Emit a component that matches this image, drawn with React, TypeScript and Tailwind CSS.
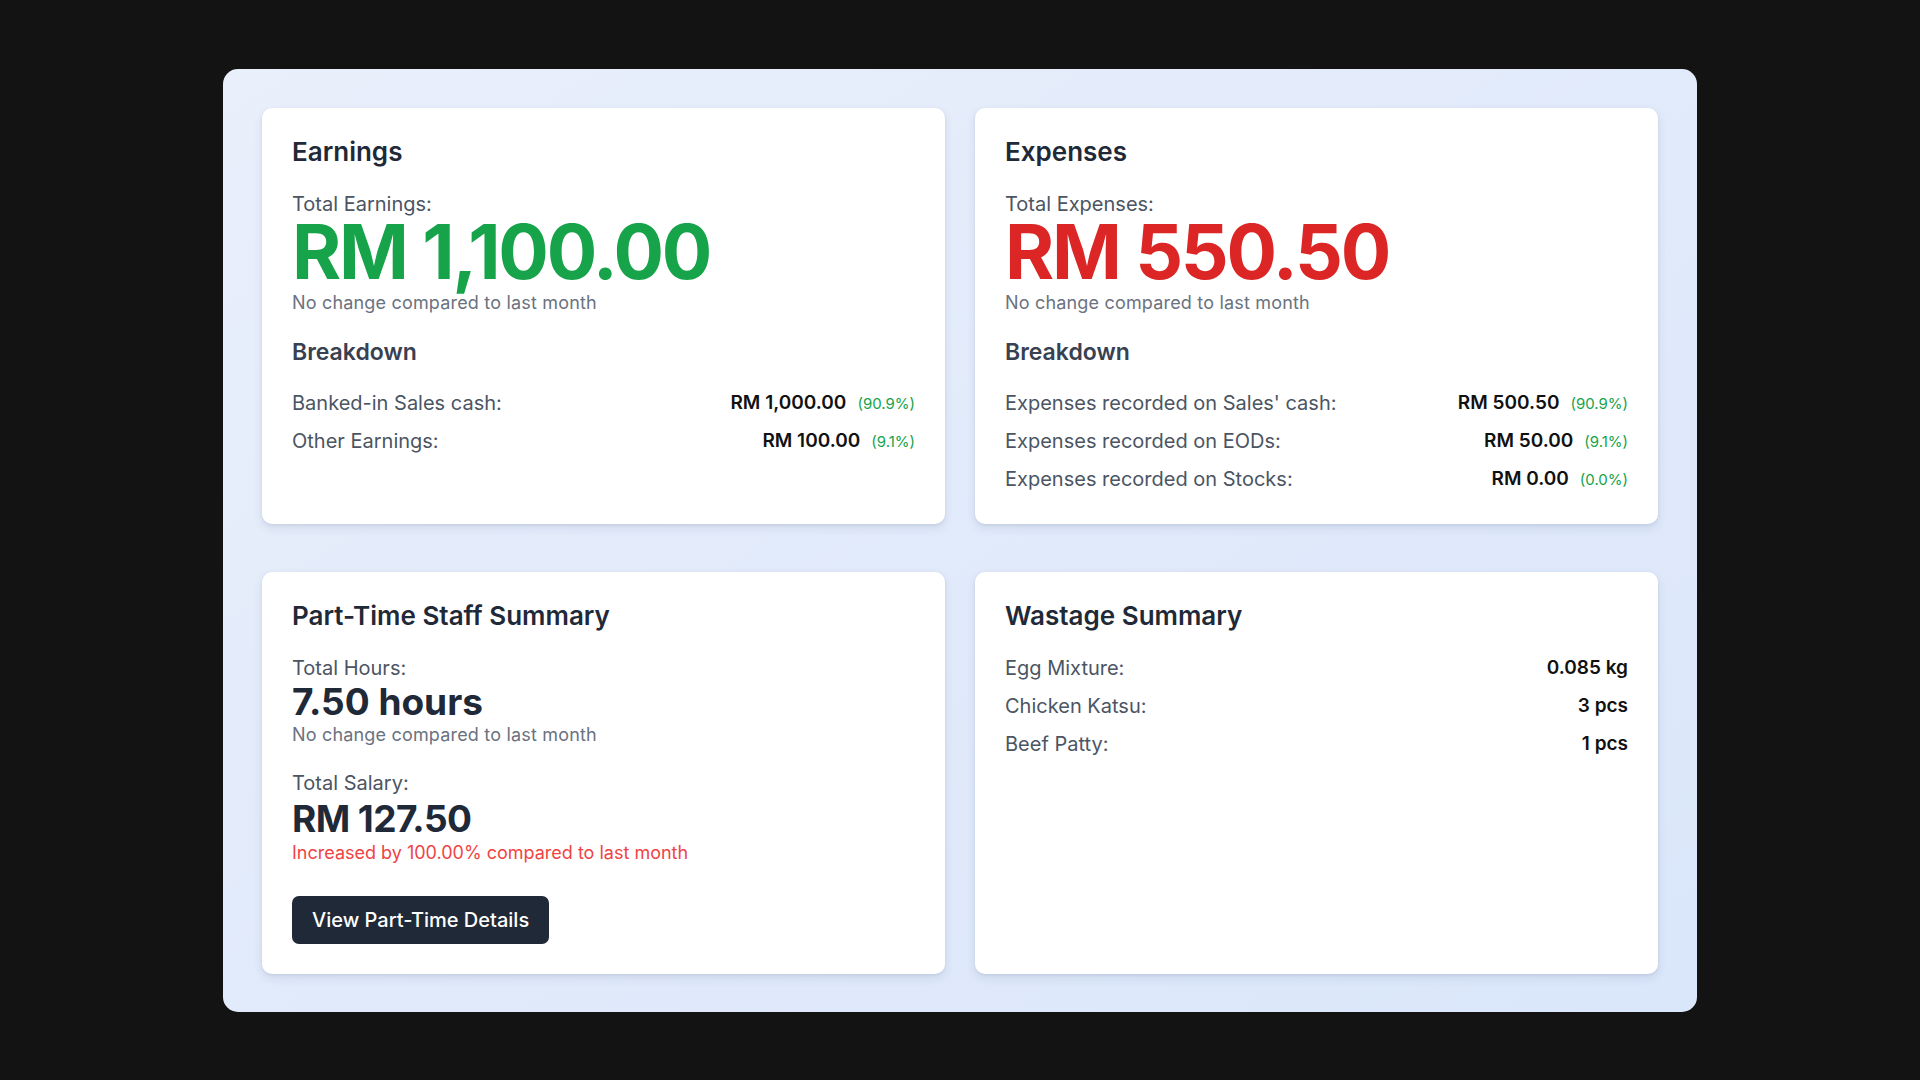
import React from 'react';

type Line = { label: string; value: string; pct?: string };

const earnings: Line[] = [
  { label: 'Banked-in Sales cash:', value: 'RM 1,000.00', pct: '(90.9%)' },
  { label: 'Other Earnings:', value: 'RM 100.00', pct: '(9.1%)' },
];

const expenses: Line[] = [
  { label: "Expenses recorded on Sales' cash:", value: 'RM 500.50', pct: '(90.9%)' },
  { label: 'Expenses recorded on EODs:', value: 'RM 50.00', pct: '(9.1%)' },
  { label: 'Expenses recorded on Stocks:', value: 'RM 0.00', pct: '(0.0%)' },
];

const wastage: Line[] = [
  { label: 'Egg Mixture:', value: '0.085 kg' },
  { label: 'Chicken Katsu:', value: '3 pcs' },
  { label: 'Beef Patty:', value: '1 pcs' },
];

function Card({ children }: { children: React.ReactNode }) {
  return (
    <div className="bg-white rounded-[10px] shadow-[0_4px_10px_rgba(30,50,90,0.10),0_1px_3px_rgba(30,50,90,0.08)] px-[30px] pt-[29px] pb-[30px] flex flex-col">
      {children}
    </div>
  );
}

function Title({ children }: { children: React.ReactNode }) {
  return <h2 className="text-[26px] leading-[30px] font-semibold text-[#1f2937]">{children}</h2>;
}

function Rows({ rows }: { rows: Line[] }) {
  return (
    <div className="flex flex-col gap-[8px]">
      {rows.map((r) => (
        <div key={r.label} className="flex items-center justify-between h-[30px]">
          <span className="text-[20px] leading-[30px] text-[#4b5563]">{r.label}</span>
          <span className="flex items-baseline">
            <span className="text-[19px] leading-[30px] font-semibold text-[#111111]">{r.value}</span>
            {r.pct && <span className="ml-[11px] text-[15px] text-[#16a34a]">{r.pct}</span>}
          </span>
        </div>
      ))}
    </div>
  );
}

function TotalCard({
  title,
  label,
  amount,
  color,
  rows,
}: {
  title: string;
  label: string;
  amount: string;
  color: string;
  rows: Line[];
}) {
  return (
    <Card>
      <Title>{title}</Title>
      <p className="mt-[23px] text-[20px] leading-[28px] text-[#4b5563]">{label}</p>
      <p className={`text-[75px] leading-[68px] font-bold tracking-[-0.03em] ${color}`}>{amount}</p>
      <p className="mt-[5px] text-[18px] leading-[24px] tracking-[0.01em] text-[#6b7280]">
        No change compared to last month
      </p>
      <h3 className="mt-[22px] text-[23px] leading-[30px] font-semibold text-[#374151]">Breakdown</h3>
      <div className="mt-[21px]">
        <Rows rows={rows} />
      </div>
    </Card>
  );
}

export default function App() {
  return (
    <div
      className="min-h-screen w-full bg-[#131313] flex items-center justify-center"
      style={{ fontFamily: 'Inter, "Noto Sans", sans-serif' }}
    >
      <div className="w-[1474px] rounded-[15px] bg-gradient-to-br from-[#e9effb] to-[#dae6fa] px-[39px] pt-[39px] pb-[38px] grid grid-cols-2 gap-x-[30px] gap-y-[48px]">
        <TotalCard
          title="Earnings"
          label="Total Earnings:"
          amount="RM 1,100.00"
          color="text-[#16a34a]"
          rows={earnings}
        />
        <TotalCard
          title="Expenses"
          label="Total Expenses:"
          amount="RM 550.50"
          color="text-[#dc2626]"
          rows={expenses}
        />

        <Card>
          <Title>Part-Time Staff Summary</Title>
          <p className="mt-[23px] text-[20px] leading-[28px] text-[#4b5563]">Total Hours:</p>
          <p className="text-[37px] leading-[40px] font-bold text-[#1f2937]">7.50 hours</p>
          <p className="mt-[1px] text-[18px] leading-[24px] tracking-[0.01em] text-[#6b7280]">
            No change compared to last month
          </p>
          <p className="mt-[22px] text-[20px] leading-[28px] text-[#4b5563]">Total Salary:</p>
          <p className="mt-[2px] text-[37px] leading-[40px] font-bold tracking-[-0.015em] text-[#1f2937]">RM 127.50</p>
          <p className="mt-[2px] text-[18px] leading-[24px] text-[#ef4444]">Increased by 100.00% compared to last month</p>
          <div className="mt-[31px]">
            <button className="h-[48px] px-[20px] rounded-[7px] bg-[#1f2937] text-white text-[20px] font-medium">
              View Part-Time Details
            </button>
          </div>
        </Card>

        <Card>
          <Title>Wastage Summary</Title>
          <div className="mt-[22px]">
            <Rows rows={wastage} />
          </div>
        </Card>
      </div>
    </div>
  );
}
